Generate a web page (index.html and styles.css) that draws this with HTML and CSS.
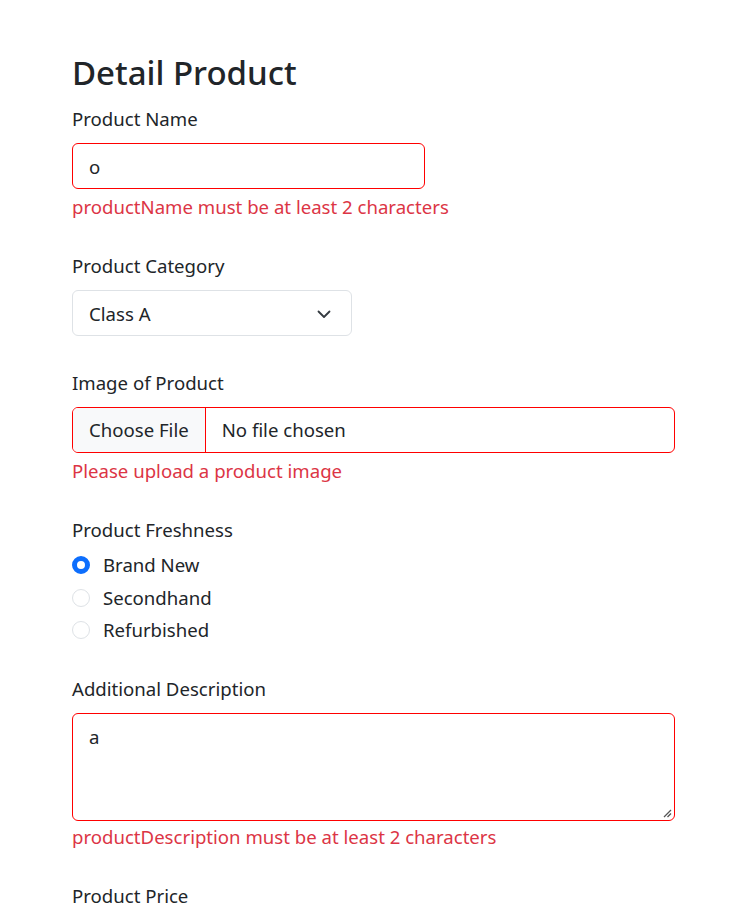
FILE: index.html
```html
<!DOCTYPE html>
<html lang="en">
<head>
<meta charset="utf-8">
<title>Detail Product</title>
<link rel="stylesheet" href="styles.css">
</head>
<body>
<main class="page">
  <h1 class="title">Detail Product</h1>
  <form class="form">
    <div class="group">
      <label class="label">Product Name</label>
      <div class="field field-name invalid">o</div>
      <div class="error">productName must be at least 2 characters</div>
    </div>
    <div class="group">
      <label class="label">Product Category</label>
      <div class="field field-select">
        <span>Class A</span>
        <svg class="chevron" width="14" height="9" viewBox="0 0 14 9"><path d="M1.5 1.5l5.5 5.5 5.5-5.5" fill="none" stroke="#343a40" stroke-width="1.8" stroke-linecap="round" stroke-linejoin="round"/></svg>
      </div>
    </div>
    <div class="group">
      <label class="label">Image of Product</label>
      <div class="field field-file invalid">
        <span class="file-btn">Choose File</span>
        <span class="file-name">No file chosen</span>
      </div>
      <div class="error">Please upload a product image</div>
    </div>
    <div class="group">
      <label class="label label-radio">Product Freshness</label>
      <div class="radios">
        <div class="radio-row"><span class="radio checked"></span><span>Brand New</span></div>
        <div class="radio-row"><span class="radio"></span><span>Secondhand</span></div>
        <div class="radio-row"><span class="radio"></span><span>Refurbished</span></div>
      </div>
    </div>
    <div class="group">
      <label class="label">Additional Description</label>
      <div class="field field-area invalid">a
        <svg class="grip" width="9" height="9" viewBox="0 0 9 9"><path d="M8 1L1 8M8 4.5L4.5 8" stroke="#555" stroke-width="1.3" fill="none"/></svg>
      </div>
      <div class="error error-area">productDescription must be at least 2 characters</div>
    </div>
    <div class="group">
      <label class="label">Product Price</label>
    </div>
  </form>
</main>
</body>
</html>
```
FILE: styles.css
```css
html, body {
  margin: 0;
  padding: 0;
  background: #fff;
}
body {
  font-family: "Noto Sans", "Open Sans", sans-serif;
  font-size: 18.6px;
  line-height: 24px;
  color: #212529;
  overflow: hidden;
  height: 912px;
}
.page {
  padding: 53px 0 0 72px;
  width: 603px;
}
.title {
  margin: 0 0 14px;
  font-size: 33px;
  line-height: 40px;
  font-weight: 500;
  color: #212529;
}
.form {
  display: flex;
  flex-direction: column;
  gap: 35px;
}
.group {
  display: flex;
  flex-direction: column;
}
.label {
  display: block;
  margin-bottom: 12px;
}
.label-radio {
  margin-bottom: 11px;
}
.field {
  box-sizing: border-box;
  height: 46px;
  border: 1px solid #dee2e6;
  border-radius: 6px;
  padding: 11px 16px 9px;
  background: #fff;
}
.field.invalid {
  border-color: #ff0000;
}
.field-name {
  width: 353px;
}
.field-select {
  width: 280px;
  display: flex;
  align-items: center;
  justify-content: space-between;
  padding-right: 20px;
}
.chevron {
  display: block;
}
.field-file {
  width: 603px;
  padding: 0;
  display: flex;
  align-items: stretch;
  overflow: hidden;
}
.file-btn {
  background: #f8f9fa;
  padding: 10px 16px;
  border-right: 1px solid #ff0000;
}
.file-name {
  padding: 10px 16px;
}
.field-area {
  width: 603px;
  height: 108px;
  position: relative;
}
.grip {
  position: absolute;
  right: 2px;
  bottom: 2px;
}
.error {
  margin-top: 6px;
  color: #dc3545;
}
.error-area {
  margin-top: 4px;
}
.radios {
  display: flex;
  flex-direction: column;
  gap: 8.5px;
}
.radio-row {
  display: flex;
  align-items: center;
  gap: 13px;
  height: 24px;
}
.radio {
  box-sizing: border-box;
  width: 18px;
  height: 18px;
  border-radius: 50%;
  border: 1px solid #dee2e6;
  background: #fff;
}
.radio.checked {
  border: 5.5px solid #0d6efd;
  background: #fff;
}
```
